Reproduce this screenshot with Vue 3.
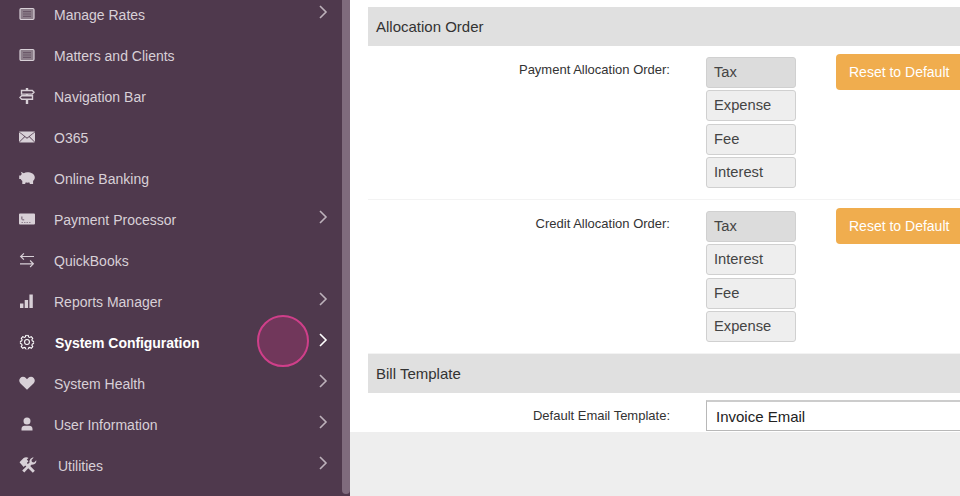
<script setup>
const menu = [
  { label: 'Manage Rates', icon: 'list', arrow: true },
  { label: 'Matters and Clients', icon: 'list' },
  { label: 'Navigation Bar', icon: 'sign' },
  { label: 'O365', icon: 'mail' },
  { label: 'Online Banking', icon: 'piggy' },
  { label: 'Payment Processor', icon: 'card', arrow: true },
  { label: 'QuickBooks', icon: 'swap' },
  { label: 'Reports Manager', icon: 'bars', arrow: true },
  { label: 'System Configuration', icon: 'gear', arrow: true, active: true },
  { label: 'System Health', icon: 'heart', arrow: true },
  { label: 'User Information', icon: 'user', arrow: true },
  { label: 'Utilities', icon: 'tools', arrow: true, wide: true }
]

const orders = [
  { label: 'Payment Allocation Order:', items: ['Tax', 'Expense', 'Fee', 'Interest'] },
  { label: 'Credit Allocation Order:', items: ['Tax', 'Interest', 'Fee', 'Expense'] }
]
</script>

<template>
  <div class="page">
    <aside class="sidebar">
      <ul class="menu">
        <li v-for="item in menu" :key="item.label" class="menu-item" :class="{ active: item.active }">
          <svg class="icon" :class="item.icon" viewBox="0 0 16 16" fill="currentColor">
            <template v-if="item.icon === 'list'">
              <rect x="1" y="2.500" width="14" height="11" rx="1.200" fill="#8d7f8b" stroke="currentColor" stroke-width="1.200" />
              <path d="M4 5h8v1.200H4zM4 7.400h8v1.200H4zM4 9.800h8V11H4z" fill="#6b5869" />
            </template>
            <g v-else-if="item.icon === 'sign'">
              <path d="M6.800 0h2.400v2H6.800zM6.800 6h2.400v2H6.800zM6.800 11.500h2.400V16H6.800z" />
              <path d="M2.500 2.500h10.800l1.700 1.800-1.700 1.800H2.500z" fill="none" stroke="currentColor" stroke-width="1.400" />
              <path d="M13.500 7.800H2.700L1 9.600l1.700 1.700h10.800z" fill="none" stroke="currentColor" stroke-width="1.400" />
            </g>
            <path v-else-if="item.icon === 'mail'" d="M0 2.500h16L8 8.800zM0 3.300l5.400 4.300L0 12.900zM16 3.300v9.600l-5.400-5.300zM5.900 8 8 9.700 10.100 8l5.600 5.500H.3z" />
            <path v-else-if="item.icon === 'piggy'" d="M1.800 1.800l3 1.400c1-.6 2.100-.9 3.400-.9 3.900 0 7.600 1.800 7.600 5.200 0 1.400-.6 2.500-1.700 3.300v3.200h-3.200l-.5-1.500c-1.300.2-2.500.2-3.800 0l-.5 1.500H3.300v-3.100c-.8-.5-1.300-1-1.600-1.800H.2V5.400h1.500c.3-.5.7-1 1.100-1.400z" />
            <path v-else-if="item.icon === 'card'" fill-rule="evenodd" d="M1 2.500h14a1 1 0 0 1 1 1v9a1 1 0 0 1-1 1H1a1 1 0 0 1-1-1v-9a1 1 0 0 1 1-1zM2.500 5.500v3h.8v.8h1.900v-.9H3.300V5.500zM2.500 10.900v.6H4v-.6zM5 10.900v.6h1.500v-.6zM7.500 10.900v.6H9v-.6zM10 10.900v.6h1.500v-.6z" />
            <path v-else-if="item.icon === 'swap'" d="M4.500 1l.8.8-2.200 2.200H15v1.100H3.100l2.200 2.200-.8.800L.8 4.600zM11.500 8l3.700 3.700-3.700 3.700-.8-.8 2.200-2.200H1v-1.100h11.900l-2.200-2.200z" />
            <path v-else-if="item.icon === 'bars'" d="M1 10.500h3.400V15H1zM5.700 7h3.400v8H5.700zM10.400 1.500h3.400V15h-3.400z" />
            <g v-else-if="item.icon === 'gear'" fill="none" stroke="currentColor" stroke-width="1.200">
              <path d="M6.700 1h2.600l.4 1.900 1.300.6 1.700-1 1.700 1.900-1 1.600.6 1.400 1.700.5v2.200l-1.700.5-.6 1.400 1 1.600-1.700 1.900-1.700-1-1.300.6-.4 1.900H6.700l-.4-1.900-1.300-.6-1.700 1-1.700-1.900 1-1.600-.6-1.400-1.700-.5V7.900l1.700-.5.6-1.400-1-1.600 1.700-1.900 1.700 1 1.300-.6z" transform="translate(0 -.5)" />
              <circle cx="8" cy="8" r="2.700" />
            </g>
            <path v-else-if="item.icon === 'heart'" d="M8 14.800 1.500 8.500C-.2 6.800-.1 4.300 1.300 2.900c1.600-1.500 4.100-1.300 5.600.2L8 4.200l1.100-1.100c1.500-1.500 4-1.700 5.600-.2 1.400 1.400 1.500 3.900-.2 5.600z" />
            <path v-else-if="item.icon === 'user'" d="M8 1.500a3.500 3.500 0 1 1 0 7 3.500 3.500 0 0 1 0-7zM2.500 14.500v-1.800c0-1.800 1.500-3 3-3h5c1.500 0 3 1.200 3 3v1.800z" />
            <path v-else-if="item.icon === 'tools'" d="M.3 5.600 4 1.800c1.500-.9 3.200-.8 4.400 0L6.800 3.200l1.500 1.500-1.500 1.500 1 1 1.500-1.500c-.5-1.800.9-4.300 3.700-4.300l-2 2.100.4 1.900 1.900.4 2-2c.3 2.900-2.200 4.200-4 3.800l-1.400 1.400 4.100 4.100-1.800 1.800-4.100-4.100-3.500 3.900-1.900-1.700 3.700-3.600-1-1-1.400 1.300z" />
          </svg>
          <span class="label" :class="{ wide: item.wide, strong: item.active }">{{ item.label }}</span>
          <svg v-if="item.arrow" class="chevron" viewBox="0 0 9 14" fill="none" stroke="currentColor" stroke-width="1.600">
            <path d="M1 1l6 6-6 6" />
          </svg>
        </li>
      </ul>
      <div class="scrollbar"></div>
      <div class="click-dot"></div>
    </aside>

    <main class="content">
      <section class="panel">
        <h3 class="section-head">Allocation Order</h3>
        <div v-for="order in orders" :key="order.label" class="order-row">
          <label class="field-label">{{ order.label }}</label>
          <div class="order-list">
            <div v-for="(name, i) in order.items" :key="name" class="order-item" :class="{ first: i === 0 }">{{ name }}</div>
          </div>
          <button class="reset-btn">Reset to Default</button>
        </div>
        <h3 class="section-head">Bill Template</h3>
        <div class="template-row">
          <label class="field-label">Default Email Template:</label>
          <div class="select-box">Invoice Email</div>
        </div>
      </section>
    </main>
  </div>
</template>

<style>
html, body {
  margin: 0;
  overflow: hidden;
}
</style>

<style scoped>
.page {
  display: flex;
  width: 960px;
  height: 496px;
  overflow: hidden;
  font-family: "Liberation Sans", Arial, sans-serif;
  background: #eeeeee;
}
.sidebar {
  position: relative;
  flex: 0 0 350px;
  background: #4f394d;
  overflow: hidden;
}
.menu {
  list-style: none;
  margin: -6px 0 0;
  padding: 0;
}
.menu-item {
  display: flex;
  align-items: center;
  height: 41px;
  padding-left: 19px;
  color: #d8d0d7;
  font-size: 14px;
}
.menu-item.active {
  color: #ffffff;
}
.icon {
  flex: 0 0 16px;
  width: 16px;
  height: 16px;
  margin-top: -1px;
}
.icon.gear {
  transform: scale(0.9);
}
.icon.tools {
  transform: scale(1.12) translateX(1px);
}
.label {
  margin-left: 19px;
}
.label.wide {
  margin-left: 23px;
}
.label.strong {
  margin-left: 20px;
  font-weight: bold;
  letter-spacing: -0.05px;
}
.chevron {
  position: absolute;
  left: 319px;
  width: 9px;
  height: 14px;
  margin-top: -5px;
  color: #bdb2bb;
}
.active .chevron {
  color: #ffffff;
}
.scrollbar {
  position: absolute;
  top: 0;
  right: 0;
  bottom: 2px;
  width: 8px;
  border-radius: 0 0 4px 4px;
  background: #7f6b7d;
}
.click-dot {
  position: absolute;
  left: 257px;
  top: 315px;
  width: 52px;
  height: 52px;
  box-sizing: border-box;
  border: 2px solid #cf3f8a;
  border-radius: 50%;
  background: #71375b;
}
.content {
  flex: 1;
  min-width: 0;
}
.panel {
  height: 432px;
  padding: 7px 0 0 18px;
  box-sizing: border-box;
  background: #ffffff;
  overflow: hidden;
}
.section-head {
  margin: 0;
  height: 39px;
  line-height: 39px;
  padding-left: 8px;
  background: #e0e0e0;
  color: #333333;
  font-size: 15px;
  font-weight: normal;
}
.order-row {
  display: flex;
  align-items: flex-start;
  height: 154px;
  box-sizing: border-box;
  border-bottom: 1px solid #f3f3f3;
  padding-top: 11px;
}
.field-label {
  flex: 0 0 302px;
  text-align: right;
  color: #333333;
  font-size: 13px;
  line-height: 26px;
}
.order-list {
  flex: 0 0 90px;
  display: flex;
  flex-direction: column;
  gap: 2.400px;
  margin-left: 36px;
}
.order-item {
  height: 31px;
  line-height: 28px;
  box-sizing: border-box;
  padding-left: 7px;
  border: 1px solid #d0d0d0;
  border-radius: 3px;
  background: #eeeeee;
  color: #444444;
  font-size: 14.700px;
}
.order-item.first {
  background: #dcdcdc;
}
.reset-btn {
  flex: 0 0 124px;
  height: 36px;
  margin: -3px 0 0 40px;
  padding: 0 0 0 13px;
  text-align: left;
  border: none;
  border-radius: 4px 0 0 4px;
  background: #f0ad4e;
  color: #ffffff;
  font-family: inherit;
  font-size: 14px;
}
.template-row {
  display: flex;
  align-items: flex-start;
  height: 39px;
  padding-top: 7px;
  box-sizing: border-box;
}
.template-row .field-label {
  line-height: 32px;
}
.select-box {
  flex: 1;
  margin-left: 36px;
  height: 31px;
  line-height: 29px;
  box-sizing: border-box;
  padding-left: 9px;
  border: 1px solid #b8b8b8;
  border-top: 2px solid #cccccc;
  border-right: none;
  color: #222222;
  font-size: 15px;
}
</style>
